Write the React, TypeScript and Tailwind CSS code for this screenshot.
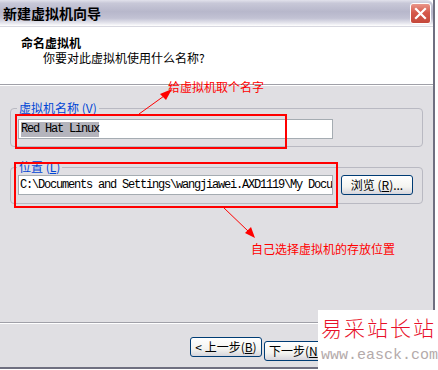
import React from 'react';

const cjk = '"Noto Sans CJK SC", "Noto Sans", sans-serif';
const mono = '"Liberation Mono", "Noto Sans CJK SC", monospace';

function XpButton({ children }: { children: React.ReactNode }) {
  return (
    <button className="h-[20px] w-[72px] shrink-0 whitespace-nowrap rounded-[3px] border border-[#003c74] bg-[linear-gradient(to_bottom,#ffffff_0%,#f4f4f0_60%,#d6d5dc_100%)] text-[12px] leading-[18px] text-black">
      {children}
    </button>
  );
}

export default function App() {
  return (
    <div
      className="relative h-[370px] w-[438px] overflow-hidden bg-white"
      style={{ fontFamily: cjk }}
    >
      {/* Window */}
      <div className="flex h-[369px] w-[435px] flex-col border-r-2 border-b-2 border-[#6f6f80]">
        {/* Title bar */}
        <div className="flex h-[26px] shrink-0 items-center justify-between rounded-tr-[6px] bg-[linear-gradient(to_bottom,#e2e2ec_0%,#c8c8d8_12%,#b7b7cb_45%,#c2c2d4_70%,#e4e4ec_88%,#ffffff_100%)] pl-[3px] pr-[2px]">
          <span className="text-[14px] font-bold leading-none text-black">新建虚拟机向导</span>
          <div className="flex h-[21px] w-[21px] items-center justify-center rounded-[3px] border border-white bg-[linear-gradient(to_bottom,#e9968a_0%,#d6594b_45%,#c4483b_100%)]">
            <svg width="13" height="13" viewBox="0 0 13 13">
              <path d="M2 2 L11 11 M11 2 L2 11" stroke="#fff" strokeWidth="2.2" strokeLinecap="square" />
            </svg>
          </div>
        </div>

        {/* Header */}
        <div className="h-[59px] shrink-0 border-t border-b border-t-[#d8d8e0] border-b-[#a0a0a8] bg-white pt-[9px]">
          <div className="pl-[21px] text-[12px] font-bold leading-[14px] text-black">命名虚拟机</div>
          <div className="pl-[43px] pt-[1px] text-[12px] leading-[14px] text-black">你要对此虚拟机使用什么名称?</div>
        </div>

        {/* Body */}
        <div className="flex flex-1 flex-col border-t border-white bg-[#e0dfe3] pt-[15px]">
          <fieldset className="mx-[10px] rounded-[4px] border border-[#b9b9c2] px-[7px] pt-[4px] pb-[7px]">
            <legend className="ml-[-1px] px-[2px] text-[12px] leading-[14px] text-[#0046d5]">
              虚拟机名称 (<span className="underline">V</span>)
            </legend>
            <div className="flex h-[20px] w-[315px] items-center border border-[#a5acb2] bg-white pl-[2px]">
              <span
                className="bg-[#b4b4bc] text-[12px] leading-[15px] tracking-[-1.2px] text-black"
                style={{ fontFamily: mono }}
              >
                Red Hat Linux
              </span>
            </div>
          </fieldset>

          <fieldset className="mx-[10px] mt-[13px] rounded-[4px] border border-[#b9b9c2] px-[7px] pt-[1px] pb-[8px]">
            <legend className="ml-[-1px] px-[2px] text-[12px] leading-[14px] text-[#0046d5]">
              位置 (<span className="underline">L</span>)
            </legend>
            <div className="flex items-start gap-[8px]">
              <div
                className="h-[20px] w-[315px] overflow-hidden whitespace-nowrap border border-[#a5acb2] bg-white pl-[1px] text-[12px] leading-[18px] tracking-[-1.2px] text-black"
                style={{ fontFamily: mono }}
              >
                C:\Documents and Settings\wangjiawei.AXD1119\My Documents\My Virtual Machines\Red Hat Linux
              </div>
              <XpButton>
                浏览 (<span className="underline">R</span>)...
              </XpButton>
            </div>
          </fieldset>

          <div className="flex-1" />

          {/* Footer */}
          <div className="h-[45px] shrink-0 border-t border-[#a0a0a8]">
            <div className="flex h-full border-t border-white pt-[13px] pl-[190px]">
              <XpButton>
                &lt; 上一步(<span className="underline">B</span>)
              </XpButton>
              <div className="ml-[2px]">
                <XpButton>
                  下一步(<span className="underline">N</span>) &gt;
                </XpButton>
              </div>
              <div className="ml-[8px]">
                <XpButton>取消</XpButton>
              </div>
            </div>
          </div>
        </div>
      </div>

      {/* Annotations */}
      <div className="absolute left-[15px] top-[114px] h-[35px] w-[272px] border-2 border-[#ff0000]" />
      <div className="absolute left-[14px] top-[162px] h-[46px] w-[324px] border-2 border-[#ff0000]" />
      <svg className="pointer-events-none absolute left-0 top-0" width="438" height="370" viewBox="0 0 438 370">
        <line x1="139" y1="114" x2="164" y2="96" stroke="#ff0000" strokeWidth="1" />
        <polygon points="172,89 160,94 166,100" fill="#ff0000" />
        <line x1="224" y1="208" x2="248" y2="231" stroke="#ff0000" strokeWidth="1" />
        <polygon points="255,238 245,233 251,227" fill="#ff0000" />
      </svg>
      <div className="absolute left-[168px] top-[80px] text-[12px] leading-[14px] text-[#ff0000]">给虚拟机取个名字</div>
      <div className="absolute left-[251px] top-[242px] text-[12px] leading-[14px] text-[#ff0000]">自己选择虚拟机的存放位置</div>

      {/* Watermark */}
      <div className="absolute left-[318px] top-[310px] flex h-[60px] w-[120px] flex-col bg-white pl-[3px] pt-[3px]">
        <div className="text-[21px] font-light leading-[28px] tracking-[2px] text-[#e8102a]">易采站长站</div>
        <div className="pt-[7px] text-[15px] leading-[16px] text-[#b4aaaa]" style={{ fontFamily: mono }}>
          www.easck.com
        </div>
      </div>
    </div>
  );
}
